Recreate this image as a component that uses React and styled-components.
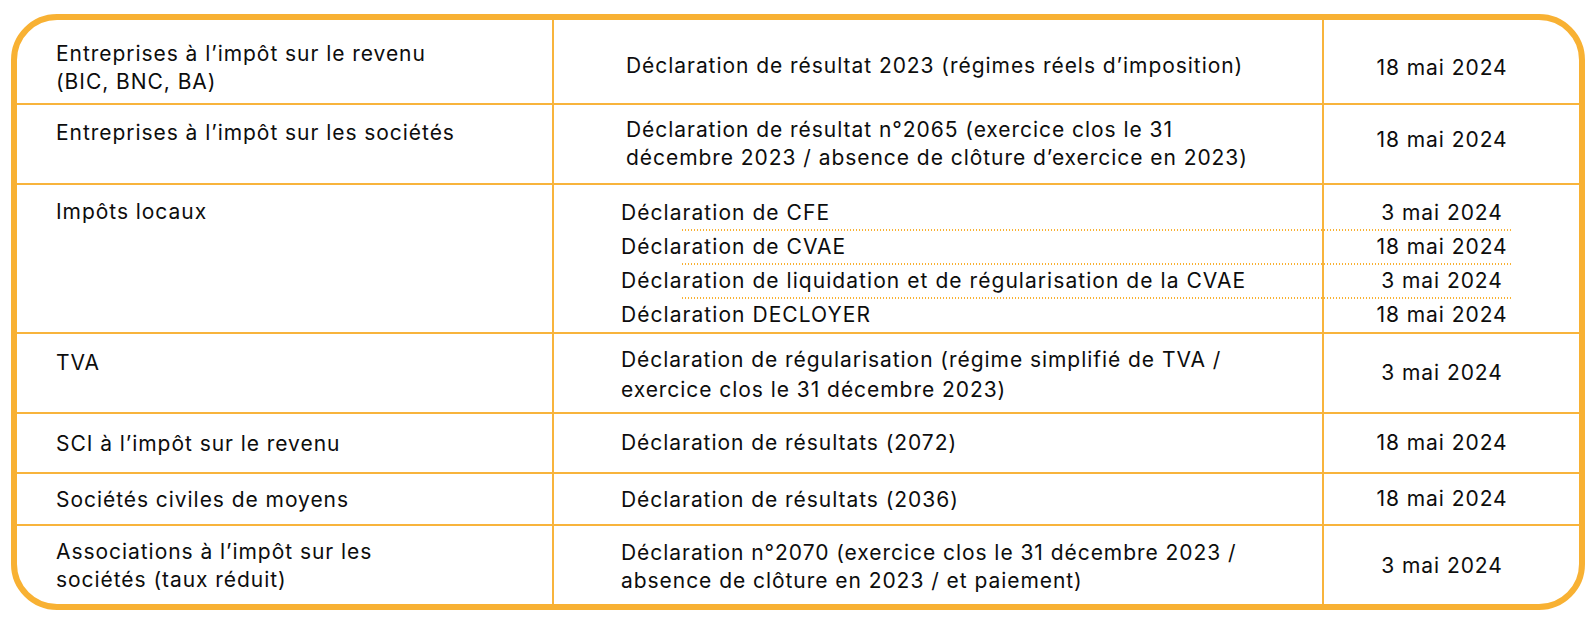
import React from 'react';
import styled, { createGlobalStyle } from 'styled-components';

const ORANGE = '#F8B133';
const LINE = '#F8B43C';

const GlobalStyle = createGlobalStyle`
  html, body {
    margin: 0;
    padding: 0;
    background: #ffffff;
  }
  body {
    font-family: Inter, "Open Sans", "DejaVu Sans", sans-serif;
    color: #0d0d0d;
  }
`;

const Page = styled.div`
  width: 1592px;
  height: 620px;
  box-sizing: border-box;
  padding: 14px 7px 0 11px;
`;

const Card = styled.div`
  width: 1574px;
  height: 596px;
  box-sizing: border-box;
  border: 6px solid ${ORANGE};
  border-radius: 46px;
  overflow: hidden;
  display: flex;
  flex-direction: column;
`;

const Row = styled.div`
  display: grid;
  grid-template-columns: 535px 770px 1fr;
  height: ${p => p.$h}px;
  box-sizing: border-box;
  border-top: ${p => (p.$first ? 'none' : `2px solid ${LINE}`)};
`;

const Cell = styled.div`
  padding-top: ${p => p.$pt || 0}px;
  font-size: 21px;
  line-height: ${p => p.$lh || 28}px;
  letter-spacing: 0.95px;
  white-space: nowrap;
`;

const Label = styled(Cell)`
  padding-left: 39px;
`;

const Desc = styled(Cell)`
  border-left: 2px solid ${LINE};
  padding-left: ${p => p.$indent}px;
`;

const DateCell = styled(Cell)`
  border-left: 2px solid ${LINE};
  padding-right: 19px;
  text-align: center;
`;

const SubTable = styled.div`
  grid-column: 2 / 4;
  border-left: 2px solid ${LINE};
  padding-top: 12px;
  background: linear-gradient(
    90deg,
    transparent 768px,
    ${LINE} 768px,
    ${LINE} 770px,
    transparent 770px
  );
`;

const SubRow = styled.div`
  display: grid;
  grid-template-columns: 770px 1fr;
  padding: 2px 0;
  font-size: 21px;
  line-height: 28px;
  letter-spacing: 1.05px;
  white-space: nowrap;
`;

const SubDesc = styled.div`
  padding-left: 67px;
`;

const SubDate = styled.div`
  padding-right: 19px;
  text-align: center;
  letter-spacing: 0.95px;
`;

const Dots = styled.div`
  height: 2px;
  margin: 0 66px 0 128px;
  background: repeating-linear-gradient(
    90deg,
    ${ORANGE} 0 1.5px,
    transparent 1.5px 3px
  );
`;

const Lines = ({ items }) =>
  items.map((t, i) => (
    <React.Fragment key={i}>
      {i > 0 && <br />}
      {t}
    </React.Fragment>
  ));

const rows = [
  {
    h: 83,
    label: ['Entreprises à l’impôt sur le revenu', '(BIC, BNC, BA)'],
    lp: 20,
    desc: ['Déclaration de résultat 2023 (régimes réels d’imposition)'],
    dp: 32,
    indent: 72,
    date: '18 mai 2024',
    tp: 34,
  },
  {
    h: 80,
    label: ['Entreprises à l’impôt sur les sociétés'],
    lp: 14,
    desc: [
      'Déclaration de résultat n°2065 (exercice clos le 31',
      'décembre 2023 / absence de clôture d’exercice en 2023)',
    ],
    dp: 11,
    indent: 72,
    date: '18 mai 2024',
    tp: 21,
  },
  { local: true, h: 149, label: ['Impôts locaux'], lp: 13 },
  {
    h: 80,
    label: ['TVA'],
    lp: 15,
    desc: [
      'Déclaration de régularisation (régime simplifié de TVA /',
      'exercice clos le 31 décembre 2023)',
    ],
    dp: 11,
    lh: 30,
    indent: 67,
    date: '3 mai 2024',
    tp: 25,
  },
  {
    h: 60,
    label: ['SCI à l’impôt sur le revenu'],
    lp: 16,
    desc: ['Déclaration de résultats (2072)'],
    dp: 15,
    indent: 67,
    date: '18 mai 2024',
    tp: 15,
  },
  {
    h: 52,
    label: ['Sociétés civiles de moyens'],
    lp: 12,
    desc: ['Déclaration de résultats (2036)'],
    dp: 12,
    indent: 67,
    date: '18 mai 2024',
    tp: 11,
  },
  {
    h: 80,
    label: ['Associations à l’impôt sur les', 'sociétés (taux réduit)'],
    lp: 12,
    desc: [
      'Déclaration n°2070 (exercice clos le 31 décembre 2023 /',
      'absence de clôture en 2023 / et paiement)',
    ],
    dp: 13,
    indent: 67,
    date: '3 mai 2024',
    tp: 26,
  },
];

const localTaxes = [
  { desc: 'Déclaration de CFE', date: '3 mai 2024' },
  { desc: 'Déclaration de CVAE', date: '18 mai 2024' },
  { desc: 'Déclaration de liquidation et de régularisation de la CVAE', date: '3 mai 2024' },
  { desc: 'Déclaration DECLOYER', date: '18 mai 2024' },
];

const App = () => (
  <>
    <GlobalStyle />
    <Page>
      <Card>
        {rows.map((row, index) => (
          <Row key={index} $h={row.h} $first={index === 0}>
            <Label $pt={row.lp}>
              <Lines items={row.label} />
            </Label>
            {row.local ? (
              <SubTable>
                {localTaxes.map((item, i) => (
                  <React.Fragment key={i}>
                    {i > 0 && <Dots />}
                    <SubRow>
                      <SubDesc>{item.desc}</SubDesc>
                      <SubDate>{item.date}</SubDate>
                    </SubRow>
                  </React.Fragment>
                ))}
              </SubTable>
            ) : (
              <>
                <Desc $pt={row.dp} $lh={row.lh} $indent={row.indent}>
                  <Lines items={row.desc} />
                </Desc>
                <DateCell $pt={row.tp}>{row.date}</DateCell>
              </>
            )}
          </Row>
        ))}
      </Card>
    </Page>
  </>
);

export default App;
